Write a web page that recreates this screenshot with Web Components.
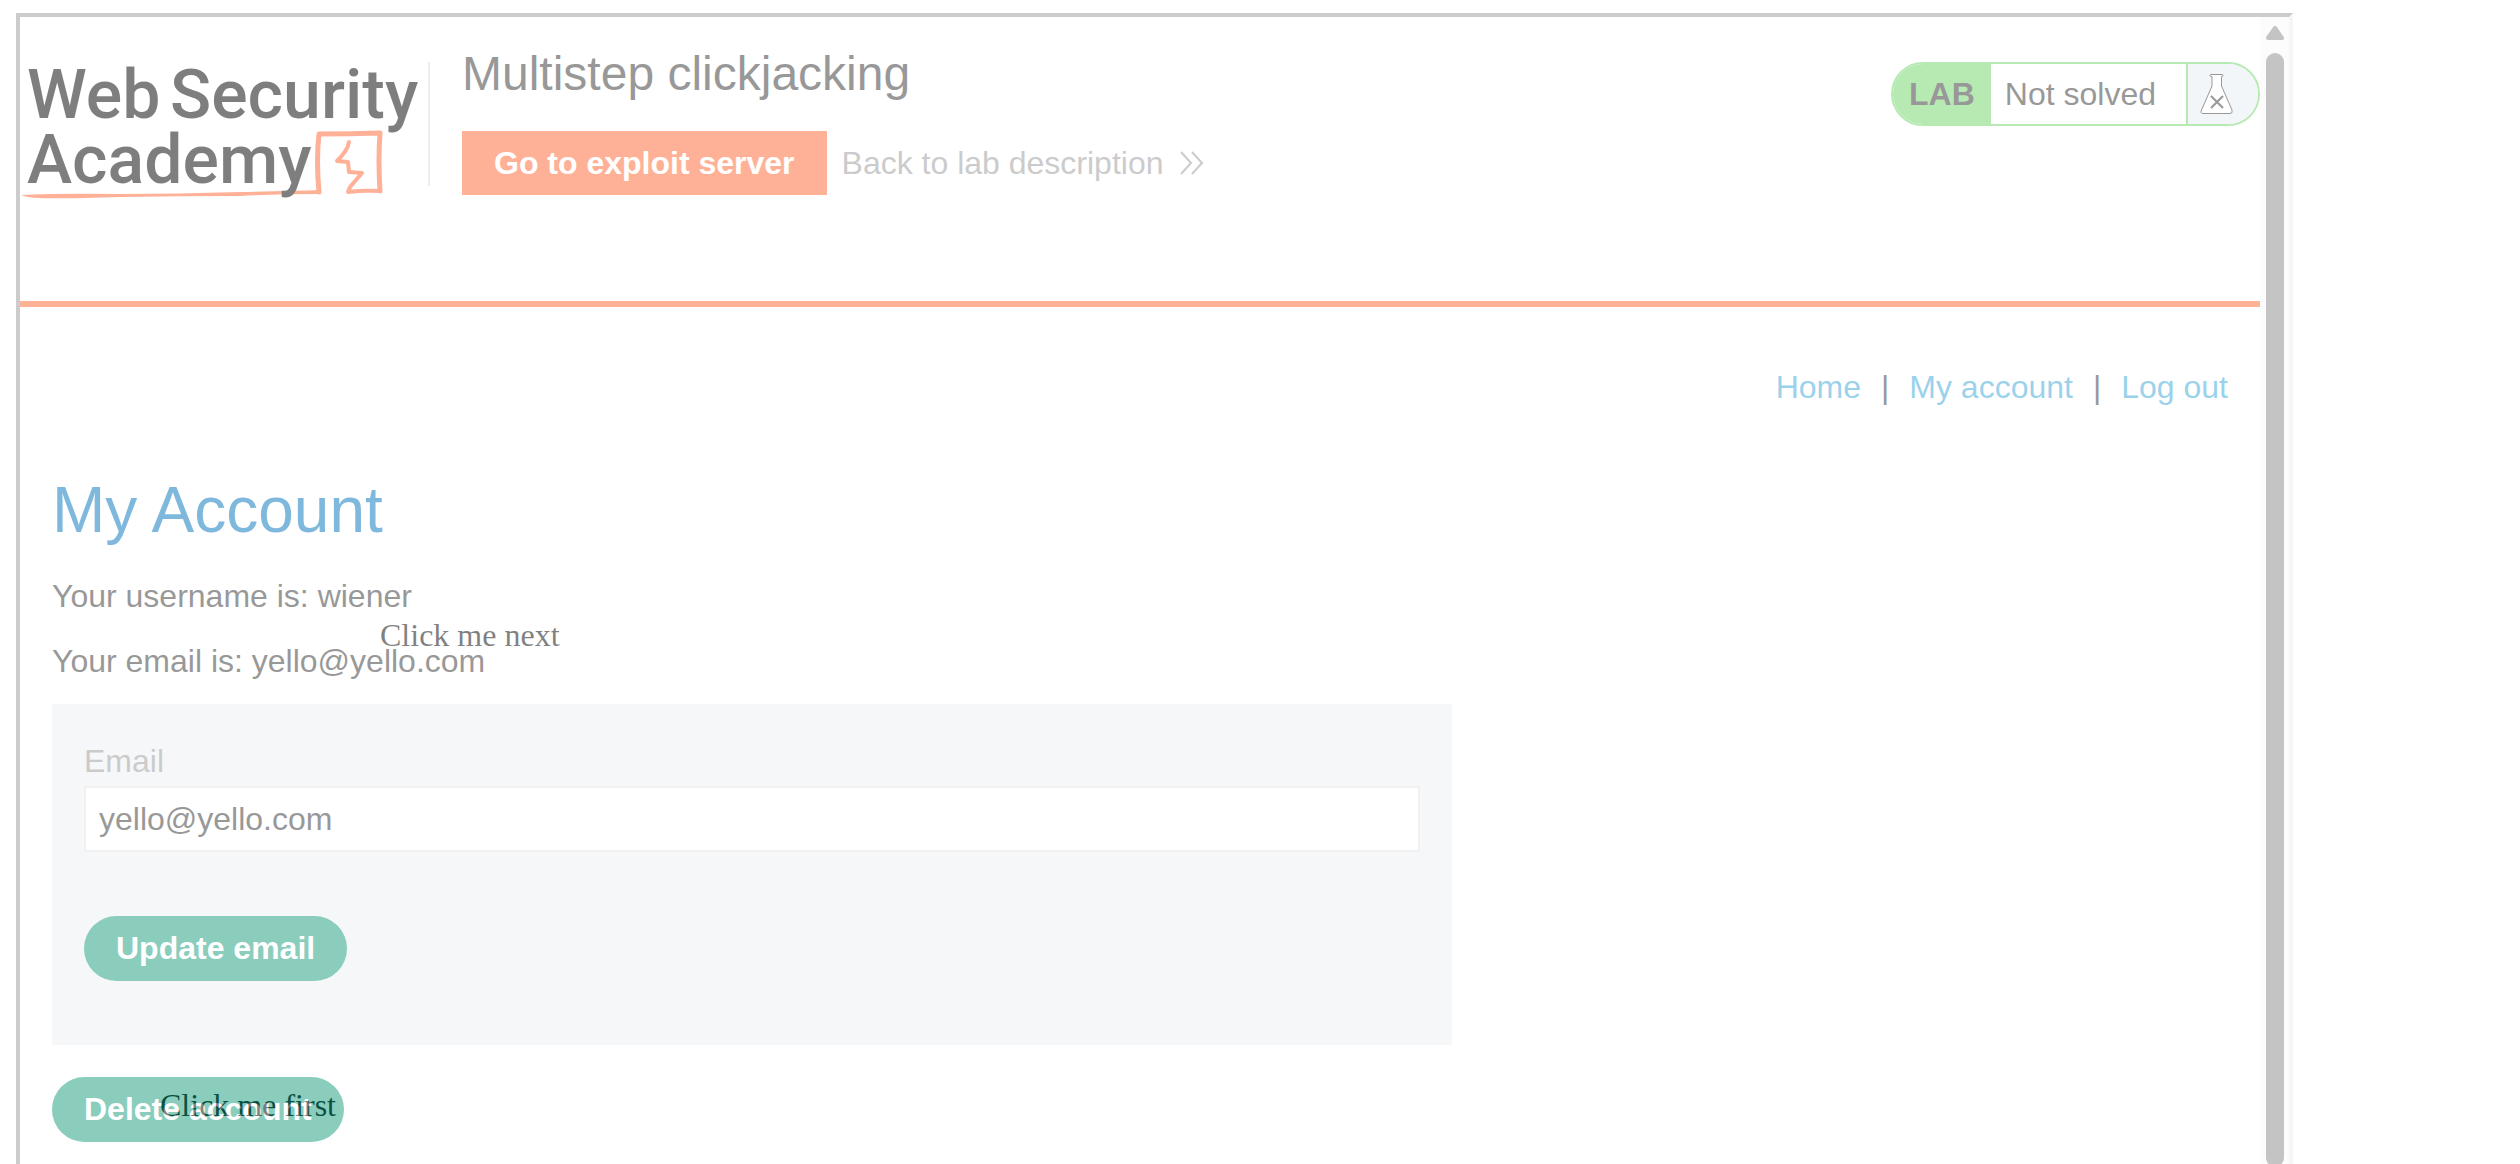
<!DOCTYPE html>
<html lang="en">
<head>
<meta charset="utf-8">
<title>Multistep clickjacking</title>
<style>
  html { overflow: hidden; background: #fff; }
  body { position: relative; margin: 13px 227px 0 16px; font: 32px/36px "Liberation Serif", serif; color: #000; }
</style>
</head>
<body>
<decoy-label style="--top: 604px; --left: 364px">Click me next</decoy-label>
<decoy-label style="--top: 1074px; --left: 144px">Click me first</decoy-label>
<framed-site>
  <lab-header></lab-header>
  <account-page></account-page>
</framed-site>

<script>
const define = (name, html) => {
  const template = document.createElement('template');
  template.innerHTML = html;
  customElements.define(name, class extends HTMLElement {
    constructor() {
      super();
      this.attachShadow({ mode: 'open' }).append(template.content.cloneNode(true));
    }
  });
};

// Bait text that sits beneath the translucent frame
define('decoy-label', `
  <style>
    :host { position: absolute; top: var(--top); left: var(--left); white-space: nowrap; }
  </style>
  <slot></slot>`);

define('framed-site', `
  <style>
    :host {
      position: relative; display: flex; box-sizing: border-box;
      min-height: calc(100vh + 20px);
      border: 4px solid; border-color: #9a9a9a #eee #eee #9a9a9a;
      background: #fff; opacity: .5;
      font-family: "Liberation Sans", Arial, sans-serif; color: #333;
    }
    main { flex: 1; min-width: 0; }
  </style>
  <main><slot></slot></main>
  <scroll-track></scroll-track>`);

define('scroll-track', `
  <style>
    :host {
      display: flex; flex-direction: column; align-items: center; gap: 13px;
      box-sizing: border-box; width: 29px; padding: 9px 0 26px; background: #fafafa;
    }
    svg { display: block; flex: none; }
    div { flex: 1; width: 18px; border-radius: 9px; background: #8b8b8b; }
  </style>
  <svg width="18" height="14" viewBox="0 0 18 14"><path d="M9 2 L16 12 H2 Z" fill="#8b8b8b" stroke="#8b8b8b" stroke-width="4" stroke-linejoin="round"/></svg>
  <div></div>`);

define('academy-logo', `
  <style>
    :host { display: block; }
    svg { display: block; overflow: visible; }
    text { font: 500 68px Roboto, sans-serif; fill: #000; }
  </style>
  <svg width="408" height="148" viewBox="20 62 408 148" role="img" aria-label="Web Security Academy">
    <g fill="none" stroke="#ff6633" stroke-linejoin="round" stroke-linecap="round">
      <path d="M319 192 Q316 160 319 134 Q350 134 380 133 Q378 160 380 191" stroke-width="5"/>
      <path d="M380 191 Q364 190 348 192 L350 187 L362 173 L349 172 L348 162 L337 161 Q348 150 349 142" stroke-width="4"/>
    </g>
    <path d="M21 195 Q60 193 120 194 Q180 194 240 192 Q290 191 320 190 V194 Q280 194 240 196 Q180 196 120 197 Q60 199 40 198 Q28 198 21 195 Z" fill="#ff6633"/>
    <text x="27" y="118">Web</text>
    <text x="170" y="118">Security</text>
    <text x="27" y="183">Academy</text>
  </svg>`);

define('lab-header', `
  <style>
    :host { display: flex; align-items: flex-start; box-sizing: border-box; height: 290px; border-bottom: 6px solid #ff6633; }
    academy-logo { margin-top: 45px; }
    .rule { width: 2px; height: 124px; margin-top: 45px; background: #ddd; }
    .title { flex: 1; margin: 29px 0 0 32px; }
    h2 { margin: 0 0 29px; font-size: 48px; line-height: 56px; font-weight: 400; }
    .links { display: flex; align-items: center; gap: 15px; }
    .exploit { padding: 14px 32px; background: #ff6633; color: #fff; font-weight: 700; text-decoration: none; }
    .back { display: flex; align-items: center; gap: 16px; color: #999; text-decoration: none; }
    lab-status { margin-top: 45px; }
  </style>
  <academy-logo></academy-logo>
  <div class="rule"></div>
  <div class="title">
    <h2>Multistep clickjacking</h2>
    <div class="links">
      <a class="exploit" href="#exploit">Go to exploit server</a>
      <a class="back" href="#lab">Back to lab description
        <svg width="26" height="28" viewBox="0 0 26 28" fill="none" stroke="#999" stroke-width="2"><path d="M2 3 L12 14 L2 25 M13 3 L23 14 L13 25"/></svg>
      </a>
    </div>
  </div>
  <lab-status></lab-status>`);

define('lab-status', `
  <style>
    :host {
      display: flex; box-sizing: border-box; height: 64px; overflow: hidden;
      border: 2px solid #71d769; border-radius: 32px; line-height: 60px;
    }
    b { padding: 0 16px; background: #71d769; }
    span { padding: 0 30px 0 14px; border-right: 2px solid #71d769; }
    i { display: flex; align-items: center; width: 70px; box-sizing: border-box; padding-left: 12px; background: #e9eef2; }
  </style>
  <b>LAB</b><span>Not solved</span>
  <i><svg width="34" height="42" viewBox="0 0 34 42" fill="none" stroke="#333" stroke-width="1">
    <path d="M11 1.500 H22 Q23 1.500 23 2.500 Q23 3.500 21.500 3.500 V13 L32 37 Q33 40.500 30 40.500 H3 Q0 40.500 1.500 37 L12 13 V3.500 Q10 3.500 10 2.500 Q10 1.500 11 1.500 Z" fill="#fff"/>
    <path d="M11 23 L23 35 M23 23 L11 35" stroke-width="2"/></svg></i>`);

define('account-nav', `
  <style>
    nav { display: flex; justify-content: flex-end; gap: 20px; }
    a { color: #37a7da; text-decoration: none; }
  </style>
  <nav><a href="#home">Home</a><span>|</span><a href="#account">My account</a><span>|</span><a href="#logout">Log out</a></nav>`);

define('pill-button', `
  <style>
    :host { display: block; }
    button {
      display: block; height: 65px; margin: 0; padding: 0 32px 2px; border: 0; border-radius: 33px;
      background: #189c7e; color: #fff; font: 700 32px/36px "Liberation Sans", Arial, sans-serif;
    }
  </style>
  <button type="button"><slot></slot></button>`);

define('email-form', `
  <style>
    :host { display: block; }
    form { padding: 39px 32px 64px; background: #ecf0f3; }
    label { display: block; margin-bottom: 7px; color: #999; }
    input {
      display: block; box-sizing: border-box; width: 100%; height: 66px; margin: 0 0 64px; padding: 0 13px;
      border: 2px solid #e4e4e4; border-radius: 0; background: #fff; color: #333;
      font: 32px/36px "Liberation Sans", Arial, sans-serif;
    }
  </style>
  <form>
    <label for="email">Email</label>
    <input id="email" type="email" value="yello@yello.com">
    <pill-button>Update email</pill-button>
  </form>`);

define('account-page', `
  <style>
    :host { display: block; padding: 62px 32px 0; }
    h1 { margin: 69px 0 32px; font-size: 64px; line-height: 72px; font-weight: 400; color: #0173bd; }
    p { margin: 0 0 29px; }
    email-form { max-width: 1400px; margin: -4px 0 32px; }
  </style>
  <account-nav></account-nav>
  <h1>My Account</h1>
  <p>Your username is: wiener</p>
  <p>Your email is: yello@yello.com</p>
  <email-form></email-form>
  <pill-button>Delete account</pill-button>`);
</script>
</body>
</html>
